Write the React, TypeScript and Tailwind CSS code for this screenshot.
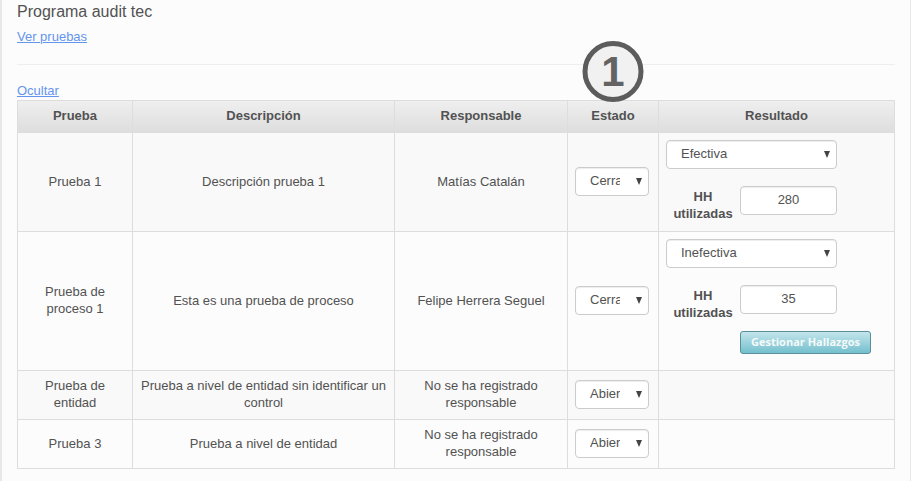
import { ReactNode } from "react";

type Result = { value: string; hours: string; manage?: boolean };
type Test = {
  name: string;
  description: string;
  owner: string;
  state: string;
  result?: Result;
};

const tests: Test[] = [
  {
    name: "Prueba 1",
    description: "Descripción prueba 1",
    owner: "Matías Catalán",
    state: "Cerrada",
    result: { value: "Efectiva", hours: "280" },
  },
  {
    name: "Prueba de proceso 1",
    description: "Esta es una prueba de proceso",
    owner: "Felipe Herrera Seguel",
    state: "Cerrada",
    result: { value: "Inefectiva", hours: "35", manage: true },
  },
  {
    name: "Prueba de entidad",
    description: "Prueba a nivel de entidad sin identificar un control",
    owner: "No se ha registrado responsable",
    state: "Abierta",
  },
  {
    name: "Prueba 3",
    description: "Prueba a nivel de entidad",
    owner: "No se ha registrado responsable",
    state: "Abierta",
  },
];

const control =
  "block h-[29px] w-full rounded border border-[#ccc] bg-white text-[#525252] shadow-[inset_0_1px_1px_rgba(0,0,0,0.075)]";

function Select({ label, value, options }: { label: string; value: string; options: string[] }) {
  return (
    <div className="relative w-full">
      <select
        aria-label={label}
        defaultValue={value}
        className={`${control} appearance-none overflow-hidden pr-7 pb-0.5 pl-3.5`}
      >
        {options.map((option) => (
          <option key={option}>{option}</option>
        ))}
      </select>
      <svg
        aria-hidden="true"
        viewBox="0 0 6 7"
        className="pointer-events-none absolute top-[11px] right-[7px] h-[7px] w-[6px] fill-[#444]"
      >
        <path d="M0 0h6L3 7z" />
      </svg>
    </div>
  );
}

function Cell({ children }: { children?: ReactNode }) {
  return <td className="border border-[#ddd] px-[7px] pt-1.5 pb-2">{children}</td>;
}

function ResultForm({ id, result }: { id: string; result: Result }) {
  return (
    <div className="flex flex-col gap-[17px] pt-px pb-2 text-left">
      <div className="w-[171px]">
        <Select label="Resultado" value={result.value} options={["Efectiva", "Inefectiva"]} />
      </div>
      <div className="flex h-[29px] gap-[7px]">
        <label htmlFor={id} className="w-[67px] pt-0.5 pl-[7px] text-center font-bold">
          HH utilizadas
        </label>
        <div className="w-[97px]">
          <input id={id} type="text" defaultValue={result.hours} className={`${control} pb-0.5 text-center`} />
        </div>
      </div>
      {result.manage && (
        <button
          type="button"
          className="ml-[74px] h-[23px] w-[131px] rounded-[3px] border border-[#5b8f99] bg-linear-to-b from-[#c3e5eb] to-[#73c0ce] pb-0.5 font-['Open_Sans',sans-serif] text-[11px] font-bold whitespace-nowrap text-[#f5fafa]"
        >
          Gestionar Hallazgos
        </button>
      )}
    </div>
  );
}

export default function App() {
  return (
    <main className="min-h-screen border-r border-l-2 border-[#e8e8e8] bg-[#fcfcfc] pt-0.5 pr-[15px] pb-3 pl-[15px] font-['Liberation_Sans',Arial,sans-serif] text-[13px] leading-[17px] text-[#525252]">
      <h1 className="text-[16px] leading-5">Programa audit tec</h1>
      <p className="mt-1.5">
        <a href="#pruebas" className="text-[#6495ed] underline">
          Ver pruebas
        </a>
      </p>
      <hr className="mt-[19px] border-[#eee]" />
      <p className="mt-[17px]">
        <a href="#ocultar" className="text-[#6495ed] underline">
          Ocultar
        </a>
      </p>
      <table className="mt-px w-full table-fixed border-collapse text-center">
        <colgroup>
          <col className="w-[115px]" />
          <col />
          <col className="w-[173px]" />
          <col className="w-[91px]" />
          <col className="w-[236px]" />
        </colgroup>
        <thead>
          <tr className="bg-linear-to-b from-[#efefef] to-[#dddddd]">
            {["Prueba", "Descripción", "Responsable", "Estado", "Resultado"].map((title) => (
              <th key={title} scope="col" className="relative border border-[#ddd] px-[7px] pt-1.5 pb-2 font-bold">
                {title}
                {title === "Estado" && (
                  <span className="absolute -top-[60px] left-1/2 flex size-[61px] -translate-x-1/2 items-center justify-center rounded-full border-5 border-[#5c5c5c] bg-[#f1f1f1] text-[42px] text-[#636363]">
                    1
                  </span>
                )}
              </th>
            ))}
          </tr>
        </thead>
        <tbody>
          {tests.map((test, index) => (
            <tr key={test.name} className="odd:bg-[#f9f9f9]">
              <Cell>{test.name}</Cell>
              <Cell>{test.description}</Cell>
              <Cell>{test.owner}</Cell>
              <Cell>
                <div className="w-[74px]">
                  <Select label="Estado" value={test.state} options={["Abierta", "Cerrada"]} />
                </div>
              </Cell>
              <Cell>{test.result && <ResultForm id={`horas-${index}`} result={test.result} />}</Cell>
            </tr>
          ))}
        </tbody>
      </table>
    </main>
  );
}
